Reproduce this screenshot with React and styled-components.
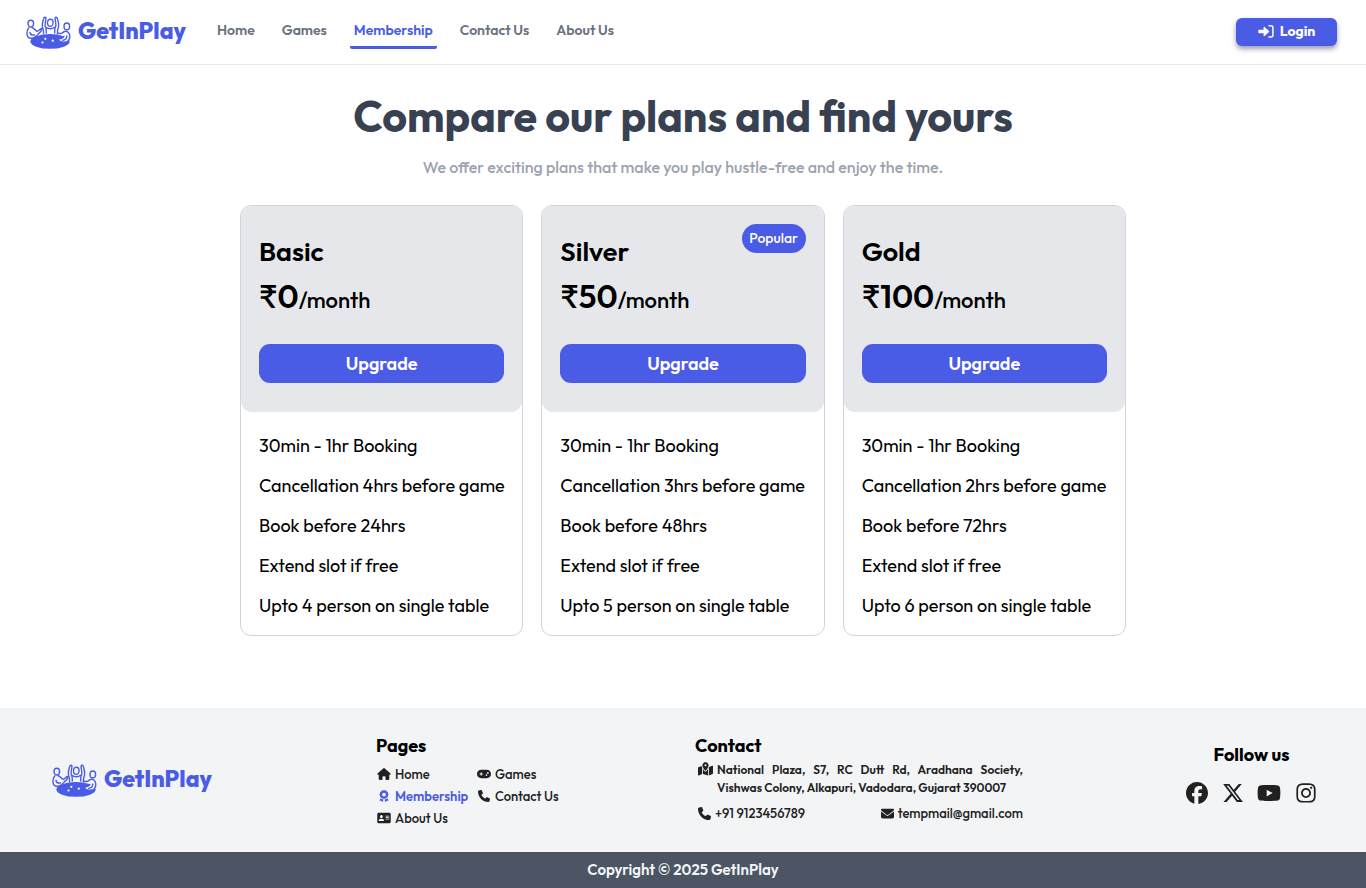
import React from 'react';
import styled, { createGlobalStyle, css } from 'styled-components';
import {
  FaHouse, FaGamepad, FaAward, FaPhone, FaAddressCard,
  FaMapLocationDot, FaEnvelope, FaFacebook, FaXTwitter, FaYoutube, FaInstagram,
} from 'react-icons/fa6';

const brand = '#4a5ce5';
const ink = '#212121';

const GlobalStyle = createGlobalStyle`
  *, *::before, *::after { box-sizing: border-box; }
  body {
    margin: 0;
    background: #fff;
    color: #000;
    font-family: Outfit, Lato, "Liberation Sans", sans-serif;
  }
  h1, h2, h3, p, ul, address { margin: 0; padding: 0; }
  ul { list-style: none; }
  a { color: inherit; text-decoration: none; }
  button { font-family: inherit; border: 0; cursor: pointer; }
`;

const Page = styled.div`
  display: flex;
  flex-direction: column;
  min-height: 100vh;
`;

const Header = styled.header`
  display: flex;
  align-items: center;
  height: 65px;
  padding: 0 29px 0 26px;
  border-bottom: 1px solid #e5e7eb;
`;

const LogoLink = styled.a`
  display: flex;
  align-items: flex-start;
  gap: 6px;
  color: ${brand};
  font-size: 23px;
  font-weight: 800;
  line-height: 32px;
`;

const LogoArt = styled.svg`
  flex: none;
  width: 46px;
  height: 35px;
`;

const Nav = styled.nav`
  display: flex;
  flex: 1;
  gap: 19px;
  margin-left: 27px;
`;

const NavLink = styled.a`
  padding: 2px 4px 4px;
  border-bottom: 3px solid transparent;
  border-radius: 2px;
  color: #6b7280;
  font-size: 14px;
  font-weight: 600;
  line-height: 24px;
  ${(p) => p.$active && css`
    color: ${brand};
    border-bottom-color: ${brand};
  `}
`;

const LoginButton = styled.button`
  display: flex;
  align-items: center;
  justify-content: center;
  gap: 6px;
  width: 101px;
  height: 28px;
  padding: 0 0 2px;
  border-radius: 6px;
  background: ${brand};
  color: #fff;
  font-size: 14px;
  font-weight: 700;
  box-shadow: 0 3px 5px rgba(30, 41, 90, 0.45);
`;

const Main = styled.main`
  flex: 1;
  padding: 24px 24px 72px;
`;

const Title = styled.h1`
  color: #374151;
  font-size: 43px;
  font-weight: 700;
  line-height: 54px;
  text-align: center;
`;

const Subtitle = styled.p`
  margin-top: 10px;
  color: #9ca3af;
  font-size: 16px;
  font-weight: 500;
  line-height: 28px;
  text-align: center;
`;

const Plans = styled.div`
  display: grid;
  grid-template-columns: repeat(3, 1fr);
  gap: 18px;
  max-width: 886px;
  margin: 24px auto 0;
`;

const Card = styled.section`
  border: 1px solid #d1d5db;
  border-radius: 11px;
`;

const CardHead = styled.div`
  position: relative;
  padding: 27px 18px 29px;
  border-radius: 11px;
  background: #e5e7eb;
`;

const PlanName = styled.h2`
  font-size: 27px;
  font-weight: 600;
  line-height: 36px;
`;

const Price = styled.p`
  font-size: 32px;
  font-weight: 600;
  line-height: 54px;
`;

const Period = styled.span`
  font-size: 22px;
  font-weight: 500;
  line-height: 1;
`;

const Badge = styled.span`
  position: absolute;
  top: 18px;
  right: 18px;
  width: 64px;
  border-radius: 15px;
  background: ${brand};
  color: #fff;
  font-size: 14px;
  font-weight: 500;
  line-height: 29px;
  text-align: center;
`;

const UpgradeButton = styled.button`
  display: block;
  width: 100%;
  height: 39px;
  margin-top: 21px;
  border-radius: 11px;
  background: ${brand};
  color: #fff;
  font-size: 18px;
  font-weight: 600;
`;

const Features = styled.ul`
  display: grid;
  gap: 12px;
  padding: 20px 17px 15px 18px;
  font-size: 18px;
  line-height: 28px;
  white-space: nowrap;
`;

const Footer = styled.footer`
  background: #f3f4f6;
`;

const FooterGrid = styled.div`
  display: grid;
  grid-template-columns: 325fr 319fr 491fr 131fr;
  min-height: 144px;
  padding: 0 49px 0 51px;
`;

const FooterLogo = styled.div`
  align-self: center;
  padding-left: 1px;
`;

const FooterColumn = styled.div`
  padding-top: 24px;
`;

const FooterTitle = styled.h3`
  font-size: 18px;
  font-weight: 700;
  line-height: 28px;
`;

const PageLinks = styled.ul`
  display: grid;
  grid-template-columns: 100px auto;
  justify-content: start;
  margin-top: 3px;
  line-height: 22px;
`;

const FooterLink = styled.a`
  display: flex;
  align-items: center;
  gap: 4px;
  padding-left: 1px;
  color: ${(p) => (p.$active ? brand : ink)};
  font-size: 13px;
  font-weight: ${(p) => (p.$active ? 600 : 500)};
  svg { width: 14px; height: 12px; }
`;

const Address = styled.address`
  width: 328px;
  padding-left: 3px;
  color: ${ink};
  font-size: 13px;
  font-style: normal;
  font-weight: 500;
  line-height: 18px;
`;

const Street = styled.p`
  display: flex;
  gap: 4px;
  margin-top: 1px;
  font-size: 12px;
  font-weight: 600;
  text-align: justify;
  svg { flex: none; width: 15px; height: 14px; margin-top: 1px; }
`;

const ContactRow = styled.div`
  display: flex;
  justify-content: space-between;
  margin-top: 7px;
`;

const ContactLink = styled.a`
  display: flex;
  align-items: center;
  gap: 4px;
  svg { width: 13px; height: 13px; }
`;

const Social = styled.div`
  padding-top: 33px;
  text-align: center;
`;

const SocialLinks = styled.div`
  display: flex;
  align-items: center;
  justify-content: space-between;
  margin-top: 12px;
  color: ${ink};
  a { display: flex; }
`;

const Copyright = styled.p`
  background: #4b5563;
  color: #f3f4f6;
  font-size: 15px;
  font-weight: 600;
  line-height: 36px;
  text-align: center;
`;

const Logo = () => (
  <LogoLink href="#home">
    <LogoArt viewBox="0 0 46 35" fill="none" stroke={brand} strokeWidth="1.4" strokeLinecap="round" aria-hidden="true">
      <ellipse cx="24" cy="26.4" rx="19.6" ry="7.4" fill={brand} stroke="none" />
      <ellipse cx="4.8" cy="8.6" rx="2.8" ry="3.4" />
      <path d="M2.7 13C1 15 .8 18 1.2 20.5c.5 2.5 3.5 3.3 6 2.5 3-1 4-3 5.5-4.5 2-1 3-3.5 3.3-5-1-.9-2.3 1.6-4.3 2.7-2 .9-3.5-3.8-5.7-3.5M4 17.5c.5 2 2 3 4.5 2.5" />
      <ellipse cx="24.3" cy="7.8" rx="2.8" ry="3.6" />
      <path d="M20.3 18c0-3 .2-4.5-1-6.5-.8-1.5.6-6 .7-8.5-1-1.7-2.2-.4-2.5 1-.6 2.500-2 5.500-1 8 .8 2 1.200 4 1.100 6.500M28.700 18c0-3-.2-4.500 1-6.500.8-1.500-.6-6-.7-8.500 1-1.700 2.200-.4 2.500 1 .6 2.500 2 5.500 1 8-.8 2-1.200 4-1.100 6.500" />
      <path d="M19.8 12.2c2.500 2 6.500 2 9 0" />
      <ellipse cx="40.8" cy="11.4" rx="2.8" ry="3.4" />
      <path d="M37.5 17c3-2 6 .5 6.300 4 .2 4-2.300 6.300-5.300 6.300-2.500 0-4-.5-5.800-1.800l-.2-1.600c3 0 4-.2 5.500-2.500" fill="#fff" />
      <path d="M31.5 18.5c1.500-1 3.500 1.500 6-1.500" />
      <path d="M40.8 21c0 2.500-1.500 4-4 4.300" />
      <g fill="#fff" stroke="none">
        <circle cx="19.3" cy="23.8" r="1.1" />
        <circle cx="26.8" cy="25.7" r="1.1" />
        <circle cx="16.5" cy="27.5" r="1.1" />
      </g>
    </LogoArt>
    GetInPlay
  </LogoLink>
);

const LoginIcon = () => (
  <svg width="16" height="16" viewBox="0 0 16 16" aria-hidden="true">
    <path d="M1.3 6.700h4.300V4.300c0-.6.600-.8 1-.4l4.400 4.100c.3.300.3.700 0 1l-4.400 4.100c-.4.400-1 .1-1-.4v-2.400H1.300c-.6 0-1-.4-1-1V7.700c0-.6.400-1 1-1Z" fill="currentColor" />
    <path d="M11 2.800h2c1.200 0 1.900.8 1.900 2v7.200c0 1.200-.7 2-1.900 2h-2" fill="none" stroke="currentColor" strokeWidth="1.500" strokeLinecap="round" />
  </svg>
);

const navItems = ['Home', 'Games', 'Membership', 'Contact Us', 'About Us'];

const plans = [
  { name: 'Basic', price: 0, cancel: 4, book: 24, people: 4 },
  { name: 'Silver', price: 50, cancel: 3, book: 48, people: 5, popular: true },
  { name: 'Gold', price: 100, cancel: 2, book: 72, people: 6 },
];

const pages = [
  ['Home', FaHouse],
  ['Games', FaGamepad],
  ['Membership', FaAward],
  ['Contact Us', FaPhone],
  ['About Us', FaAddressCard],
];

const socials = [
  ['Facebook', FaFacebook, 22],
  ['X', FaXTwitter, 22],
  ['YouTube', FaYoutube, 24],
  ['Instagram', FaInstagram, 22],
];

export default function App() {
  return (
    <Page>
      <GlobalStyle />
      <Header>
        <Logo />
        <Nav>
          {navItems.map((item) => (
            <NavLink key={item} href="#" $active={item === 'Membership'}>{item}</NavLink>
          ))}
        </Nav>
        <LoginButton type="button"><LoginIcon />Login</LoginButton>
      </Header>

      <Main>
        <Title>Compare our plans and find yours</Title>
        <Subtitle>We offer exciting plans that make you play hustle-free and enjoy the time.</Subtitle>
        <Plans>
          {plans.map((plan) => (
            <Card key={plan.name}>
              <CardHead>
                <PlanName>{plan.name}</PlanName>
                {plan.popular && <Badge>Popular</Badge>}
                <Price>₹{plan.price}<Period>/month</Period></Price>
                <UpgradeButton type="button">Upgrade</UpgradeButton>
              </CardHead>
              <Features>
                <li>30min - 1hr Booking</li>
                <li>Cancellation {plan.cancel}hrs before game</li>
                <li>Book before {plan.book}hrs</li>
                <li>Extend slot if free</li>
                <li>Upto {plan.people} person on single table</li>
              </Features>
            </Card>
          ))}
        </Plans>
      </Main>

      <Footer>
        <FooterGrid>
          <FooterLogo><Logo /></FooterLogo>
          <FooterColumn>
            <FooterTitle>Pages</FooterTitle>
            <PageLinks>
              {pages.map(([label, Icon]) => (
                <li key={label}>
                  <FooterLink href="#" $active={label === 'Membership'}><Icon />{label}</FooterLink>
                </li>
              ))}
            </PageLinks>
          </FooterColumn>
          <FooterColumn>
            <FooterTitle>Contact</FooterTitle>
            <Address>
              <Street>
                <FaMapLocationDot />
                <span>National Plaza, S7, RC Dutt Rd, Aradhana Society, Vishwas Colony, Alkapuri, Vadodara, Gujarat 390007</span>
              </Street>
              <ContactRow>
                <ContactLink href="tel:+919123456789"><FaPhone />+91 9123456789</ContactLink>
                <ContactLink href="mailto:tempmail@gmail.com"><FaEnvelope />tempmail@gmail.com</ContactLink>
              </ContactRow>
            </Address>
          </FooterColumn>
          <Social>
            <FooterTitle>Follow us</FooterTitle>
            <SocialLinks>
              {socials.map(([label, Icon, size]) => (
                <a key={label} href="#" aria-label={label}><Icon size={size} /></a>
              ))}
            </SocialLinks>
          </Social>
        </FooterGrid>
        <Copyright>Copyright © 2025 GetInPlay</Copyright>
      </Footer>
    </Page>
  );
}
